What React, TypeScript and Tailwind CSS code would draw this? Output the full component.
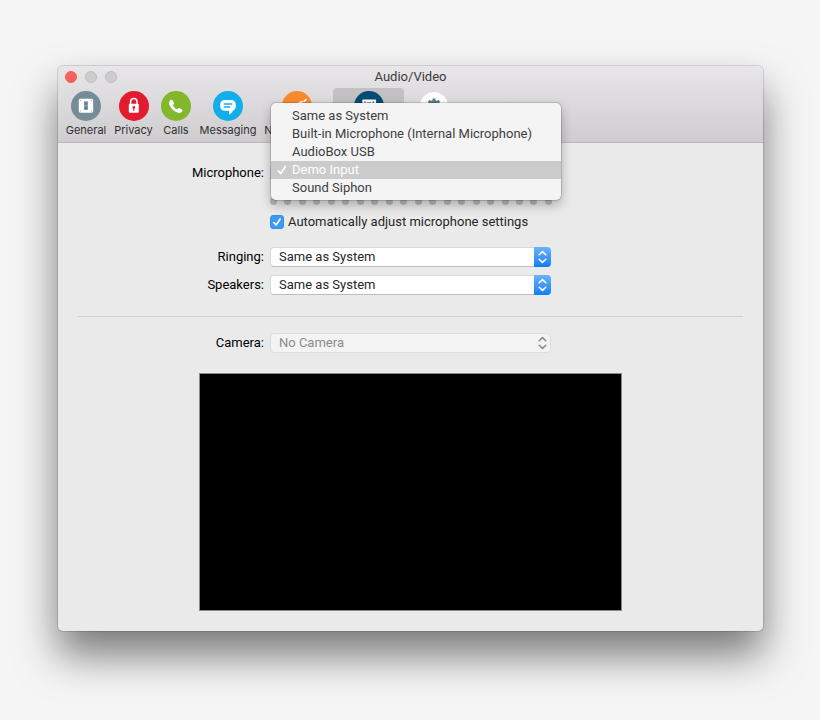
import React, { useState } from "react";
import clsx from "clsx";

const MICROPHONES = [
  "Same as System",
  "Built-in Microphone (Internal Microphone)",
  "AudioBox USB",
  "Demo Input",
  "Sound Siphon",
];

const GeneralIcon = () => (
  <svg viewBox="0 0 30 30" className="size-[30px]" aria-hidden="true">
    <circle cx="15" cy="15" r="15" fill="#748d96" />
    <rect x="7.8" y="7.8" width="14.4" height="13.9" rx="1.6" fill="#fff" />
    <rect x="12.9" y="10.3" width="4.2" height="8.8" rx="0.5" fill="#8fa3ab" />
    <path d="M13.7 11.2h2.6v2.6h-2.6zM13.7 15.6h2.6v2.6h-2.6z" fill="#5f7b86" />
    <g fill="#9db0b7">
      <circle cx="9.6" cy="9.6" r="0.6" />
      <circle cx="20.4" cy="9.6" r="0.6" />
      <circle cx="9.6" cy="19.9" r="0.6" />
      <circle cx="20.4" cy="19.9" r="0.6" />
    </g>
  </svg>
);

const PrivacyIcon = () => (
  <svg viewBox="0 0 30 30" className="size-[30px]" aria-hidden="true">
    <circle cx="15" cy="15" r="15" fill="#e31b2e" />
    <path d="M11.6 14v-3.2a3.2 3.2 0 0 1 6.4 0V14" fill="none" stroke="#fff" strokeWidth="1.5" />
    <rect x="9.8" y="12.8" width="10" height="9" rx="1" fill="#fff" />
    <circle cx="14.8" cy="16.2" r="1.3" fill="#e31b2e" />
    <path d="M14.2 16.4h1.2v3.4h-1.2z" fill="#e31b2e" />
  </svg>
);

const CallsIcon = () => (
  <svg viewBox="0 0 30 30" className="size-[30px]" aria-hidden="true">
    <circle cx="15" cy="15" r="15" fill="#84b82c" />
    <path
      d="M9.3 9.2c.7-.7 1.7-.7 2.2.1l1.3 2.2c.4.7.2 1.4-.4 1.9-.5.4-.5.8-.2 1.3.9 1.5 1.9 2.5 3.4 3.3.5.3.9.2 1.3-.3.5-.6 1.2-.8 1.9-.4l2 1.2c.8.5.8 1.5.1 2.2-1.2 1.3-2.8 1.6-4.6.9-3.7-1.5-6.5-4.2-7.9-7.9-.7-1.8-.4-3.3.9-4.5z"
      fill="#fff"
    />
  </svg>
);

const MessagingIcon = () => (
  <svg viewBox="0 0 30 30" className="size-[30px]" aria-hidden="true">
    <circle cx="15" cy="15" r="15" fill="#12aeea" />
    <path
      d="M12 9h6c3.3 0 4.9 1.9 4.9 5.4 0 2.700-1 4.400-3 5.100-.3 1.500-1.400 2.800-3.200 3.700-.5.200-.9 0-.8-.5l.3-2.900H12c-3.300 0-4.900-1.800-4.900-5.400S8.700 9 12 9z"
      fill="#fff"
    />
    <path d="M11.200 13h7.600M11.200 16h5.600" stroke="#12aeea" strokeWidth="1.3" strokeLinecap="round" />
  </svg>
);

const NotificationsIcon = () => (
  <svg viewBox="0 0 30 30" className="size-[30px]" aria-hidden="true">
    <circle cx="15" cy="15" r="15" fill="#fa8a2e" />
    <path d="M8 15l7-2.8 5.3-2.6 1.7 9.4-6.500-.6-7.500-.4z" fill="#fff" />
    <path d="M22 10.400l2-1.900" stroke="#fff" strokeWidth="1.600" strokeLinecap="round" />
  </svg>
);

const AudioVideoIcon = () => (
  <svg viewBox="0 0 30 30" className="size-[30px]" aria-hidden="true">
    <circle cx="15" cy="15" r="15" fill="#054b74" />
    <rect x="8.3" y="8.4" width="13.8" height="13.4" rx="0.8" fill="#fff" />
    <path d="M10.3 10.4h1.3v1.3h-1.3zM18.6 10.4h1.3v1.3h-1.3zM13 11.4h4v6h-4z" fill="#054b74" />
  </svg>
);

const AdvancedIcon = () => (
  <svg viewBox="0 0 30 30" className="size-[30px]" aria-hidden="true">
    <circle cx="15" cy="15" r="14.5" fill="#fff" stroke="#dcdadd" />
    <circle cx="15" cy="15" r="4.6" fill="none" stroke="#5f7d8a" strokeWidth="3" />
    <path
      d="M15 7.5v3M15 19.5v3M7.5 15h3M19.5 15h3M9.7 9.7l2 2M18.3 18.3l2 2M9.7 20.3l2-2M18.3 11.7l2-2"
      stroke="#5f7d8a"
      strokeWidth="2.8"
    />
  </svg>
);

const TABS = [
  { label: "General", icon: GeneralIcon, width: "w-12" },
  { label: "Privacy", icon: PrivacyIcon, width: "w-[47px]" },
  { label: "Calls", icon: CallsIcon, width: "w-[38px]" },
  { label: "Messaging", icon: MessagingIcon, width: "w-[66px]" },
  { label: "Notifications", icon: NotificationsIcon, width: "w-[72px]" },
  { label: "Audio/Video", icon: AudioVideoIcon, width: "w-[71px]" },
  { label: "Advanced", icon: AdvancedIcon, width: "w-[60px]" },
];

function Chevrons() {
  return (
    <svg viewBox="0 0 17 20" className="h-5 w-[17px]" fill="none" stroke="currentColor" strokeWidth="1.5" strokeLinecap="round" strokeLinejoin="round" aria-hidden="true">
      <path d="M5.2 7.800L8.500 4.600l3.300 3.200M5.200 12.200l3.300 3.200 3.300-3.200" />
    </svg>
  );
}

interface DeviceSelectProps {
  id: string;
  options: string[];
  disabled?: boolean;
}

function DeviceSelect({ id, options, disabled }: DeviceSelectProps) {
  return (
    <div className="relative w-[281px]">
      <select
        id={id}
        disabled={disabled}
        className={clsx(
          "block h-5 w-full appearance-none rounded-sm border px-2 leading-[18px]",
          disabled
            ? "border-[#dddddd] bg-[#f3f3f3] text-[#8c8c8c] opacity-100"
            : "border-[#d8d8d8] border-b-[#bdbdbd] bg-white text-[#262626]"
        )}
      >
        {options.map((option) => (
          <option key={option}>{option}</option>
        ))}
      </select>
      <span
        className={clsx(
          "pointer-events-none absolute top-0 right-0 rounded-r-sm",
          disabled ? "text-[#8c8c8c]" : "bg-linear-to-b from-[#6cb3f8] to-[#0a7cf5] text-white"
        )}
      >
        <Chevrons />
      </span>
    </div>
  );
}

export default function App() {
  const [tab, setTab] = useState("Audio/Video");
  const [microphone, setMicrophone] = useState("Demo Input");
  const [autoAdjust, setAutoAdjust] = useState(true);

  return (
    <div className="min-h-screen bg-[#f5f5f5] pt-[66px] pr-[57px] pb-20 pl-[58px] font-[Roboto,sans-serif] text-[13px] text-[#262626]">
      <main className="rounded-[5px] bg-[#eaeaea] pb-5 shadow-[0_0_0_1px_rgba(0,0,0,0.12),0_24px_42px_rgba(0,0,0,0.51)]">
        <header className="rounded-t-[5px] border-b border-[#b9b8b9] bg-linear-to-b from-[#e8e6e9] to-[#cfcdd0]">
          <div className="grid h-[22px] grid-cols-[1fr_auto_1fr] items-center px-[7px]">
            <div className="flex gap-2">
              <button type="button" aria-label="Close" className="size-3 rounded-full border border-[#f0605a] bg-[#fc605c]" />
              <button type="button" aria-label="Minimize" disabled className="size-3 rounded-full border border-[#bdbdbd] bg-[#cdcdcd]" />
              <button type="button" aria-label="Zoom" disabled className="size-3 rounded-full border border-[#bdbdbd] bg-[#cdcdcd]" />
            </div>
            <h1 className="text-[#3b3b3b]">Audio/Video</h1>
          </div>

          <nav className="flex pl-1 font-[Inter,sans-serif]">
            {TABS.map(({ label, icon: Icon, width }) => (
              <button
                key={label}
                type="button"
                onClick={() => setTab(label)}
                className={clsx(
                  "flex h-[54px] flex-col items-center justify-start gap-[2px] rounded-t-sm pt-[3px] text-[11px] leading-[14px] text-[#2f2f2f]",
                  width,
                  tab === label && "bg-[#c3c1c4]"
                )}
              >
                <Icon />
                <span className="whitespace-nowrap">{label}</span>
              </button>
            ))}
          </nav>
        </header>

        <section className="grid grid-cols-[206px_1fr] gap-x-[6px] pt-5">
          <span id="microphone-label" className="text-right leading-5 text-black">Microphone:</span>
          <div className="relative w-[281px]">
            <button
              type="button"
              aria-labelledby="microphone-label"
              aria-haspopup="listbox"
              aria-expanded="true"
              className="block h-5 w-full rounded-sm border border-[#d2d2d2] bg-white px-2 text-left leading-[18px]"
            >
              {microphone}
            </button>
            <ul
              role="listbox"
              aria-labelledby="microphone-label"
              className="absolute -top-[60px] left-px z-10 w-[290px] rounded-[5px] bg-[#f4f4f4] pt-1 pb-[3px] shadow-[0_0_0_1px_rgba(0,0,0,0.14),0_5px_12px_rgba(0,0,0,0.28)]"
            >
              {MICROPHONES.map((name) => {
                const isSelected = name === microphone;

                return (
                  <li key={name} role="option" aria-selected={isSelected}>
                    <button
                      type="button"
                      onClick={() => setMicrophone(name)}
                      className={clsx(
                        "flex h-[18px] w-full items-center text-left leading-[18px] whitespace-nowrap",
                        isSelected ? "bg-[#cbcbcb] text-white" : "text-[#404040]"
                      )}
                    >
                      <span className="flex w-[21px] justify-center">
                        {isSelected && (
                          <svg viewBox="0 0 10 10" className="size-[10px]" fill="none" stroke="currentColor" strokeWidth="1.6" strokeLinecap="round" strokeLinejoin="round" aria-hidden="true">
                            <path d="M1.3 5.8L3.8 8.6 8.5 1.3" />
                          </svg>
                        )}
                      </span>
                      {name}
                    </button>
                  </li>
                );
              })}
            </ul>
          </div>

          {/* Input level */}
          <div className="col-start-2 mt-[14px] flex w-[282px] justify-between">
            {Array.from({ length: 20 }, (_, i) => (
              <span key={i} className="h-2 w-[7px] rounded-full bg-[#b9bbbb]" />
            ))}
          </div>

          <label className="col-start-2 mt-[7px] flex h-5 items-center gap-1 justify-self-start whitespace-nowrap">
            <span className="relative flex">
              <input
                type="checkbox"
                checked={autoAdjust}
                onChange={(e) => setAutoAdjust(e.target.checked)}
                className="size-[14px] appearance-none rounded-[3px] border border-[#b5b5b5] bg-white checked:border-[#3290ee] checked:bg-[#3d9af5]"
              />
              {autoAdjust && (
                <svg viewBox="0 0 14 14" className="pointer-events-none absolute inset-0 size-[14px]" fill="none" stroke="#fff" strokeWidth="1.6" strokeLinecap="round" strokeLinejoin="round" aria-hidden="true">
                  <path d="M3.8 7.5L6.1 10 10.2 4" />
                </svg>
              )}
            </span>
            Automatically adjust microphone settings
          </label>

          <label htmlFor="ringing" className="mt-[15px] text-right leading-5 text-black">Ringing:</label>
          <div className="mt-[15px]">
            <DeviceSelect id="ringing" options={["Same as System"]} />
          </div>

          <label htmlFor="speakers" className="mt-2 text-right leading-5 text-black">Speakers:</label>
          <div className="mt-2">
            <DeviceSelect id="speakers" options={["Same as System"]} />
          </div>
        </section>

        <hr className="mx-5 mt-[21px] border-[#cfcfcf]" />

        <section className="grid grid-cols-[206px_1fr] gap-x-[6px] pt-4">
          <label htmlFor="camera" className="text-right leading-5 text-black">Camera:</label>
          <DeviceSelect id="camera" options={["No Camera"]} disabled />
        </section>

        <div className="mx-[141px] mt-5 h-[238px] border border-[#8a8a8a] bg-black" />
      </main>
    </div>
  );
}
